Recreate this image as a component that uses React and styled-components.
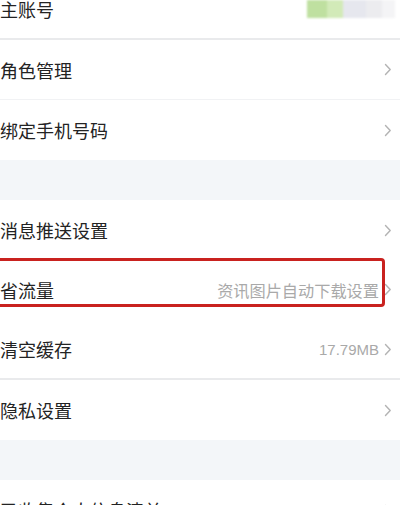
import React from 'react'
import styled, { createGlobalStyle } from 'styled-components'

// css
const GlobalStyle = createGlobalStyle`
	html, body {
		margin: 0;
		padding: 0;
		background: #ffffff;
		overflow: hidden;
	}
	body {
		font-family: "Noto Sans CJK SC", "Noto Sans", sans-serif;
	}
`
const StylePage = styled.div`
	position: relative;
	width: 400px;
	height: 505px;
	overflow: hidden;
	background: #ffffff;
`
const StyleList = styled.div`
	display: flex;
	flex-direction: column;
	margin-top: -20px;
`
const StyleRow = styled.div`
	display: flex;
	align-items: center;
	justify-content: space-between;
	height: 60px;
	box-sizing: border-box;
	padding: 0 8px 0 0;
	border-bottom: ${props => (props.$line === 'strong' ? '2px solid #e9eaec' : props.$line === 'soft' ? '1px solid #f1f2f4' : 'none')};
`
const StyleLabel = styled.span`
	font-size: 18px;
	color: #232323;
	line-height: 1;
`
const StyleRight = styled.div`
	display: flex;
	align-items: center;
	gap: 5px;
`
const StyleValue = styled.span`
	font-size: ${props => (props.$latin ? '15px' : '16.2px')};
	color: #a9a9a9;
	line-height: 1;
	font-family: ${props => (props.$latin ? '"Liberation Sans", "Noto Sans CJK SC", sans-serif' : '"Noto Sans CJK SC", sans-serif')};
`
const StyleGap = styled.div`
	height: 40px;
	background: #f3f6f9;
`
const StyleBlur = styled.div`
	display: flex;
	width: 88px;
	height: 18px;
	margin-right: -3px;
	filter: blur(1px);
`
const StyleBlurCell = styled.div`
	flex: ${props => props.$flex};
	background: ${props => props.$color};
`
const StyleHighlight = styled.div`
	position: absolute;
	left: -10px;
	top: 258px;
	width: 389px;
	height: 43px;
	border: 3px solid #c9221f;
	border-radius: 4px;
	pointer-events: none;
`

function Chevron() {
	return (
		<svg width="8" height="13" viewBox="0 0 8 13">
			<path d="M1.5 1.5 L6.2 6.5 L1.5 11.5" fill="none" stroke="#b3b3b3" strokeWidth="1.4" strokeLinecap="round" strokeLinejoin="round" />
		</svg>
	)
}

// Composant
function App() {
	return (
		<StylePage>
			<GlobalStyle />
			<StyleList>
				<StyleRow $line="strong">
					<StyleLabel>主账号</StyleLabel>
					<StyleBlur>
						<StyleBlurCell $flex={1.2} $color="#bfe0a0" />
						<StyleBlurCell $flex={1} $color="#d2eab8" />
						<StyleBlurCell $flex={1.4} $color="#e6e7ee" />
						<StyleBlurCell $flex={1} $color="#ececef" />
						<StyleBlurCell $flex={0.8} $color="#f4f4f6" />
					</StyleBlur>
				</StyleRow>
				<StyleRow $line="soft">
					<StyleLabel>角色管理</StyleLabel>
					<Chevron />
				</StyleRow>
				<StyleRow>
					<StyleLabel>绑定手机号码</StyleLabel>
					<Chevron />
				</StyleRow>
				<StyleGap />
				<StyleRow>
					<StyleLabel>消息推送设置</StyleLabel>
					<Chevron />
				</StyleRow>
				<StyleRow>
					<StyleLabel>省流量</StyleLabel>
					<StyleRight>
						<StyleValue>资讯图片自动下载设置</StyleValue>
						<Chevron />
					</StyleRight>
				</StyleRow>
				<StyleRow $line="strong">
					<StyleLabel>清空缓存</StyleLabel>
					<StyleRight>
						<StyleValue $latin>17.79MB</StyleValue>
						<Chevron />
					</StyleRight>
				</StyleRow>
				<StyleRow>
					<StyleLabel>隐私设置</StyleLabel>
					<Chevron />
				</StyleRow>
				<StyleGap />
				<StyleRow>
					<StyleLabel>已收集个人信息清单</StyleLabel>
					<Chevron />
				</StyleRow>
			</StyleList>
			<StyleHighlight />
		</StylePage>
	)
}

export default App
